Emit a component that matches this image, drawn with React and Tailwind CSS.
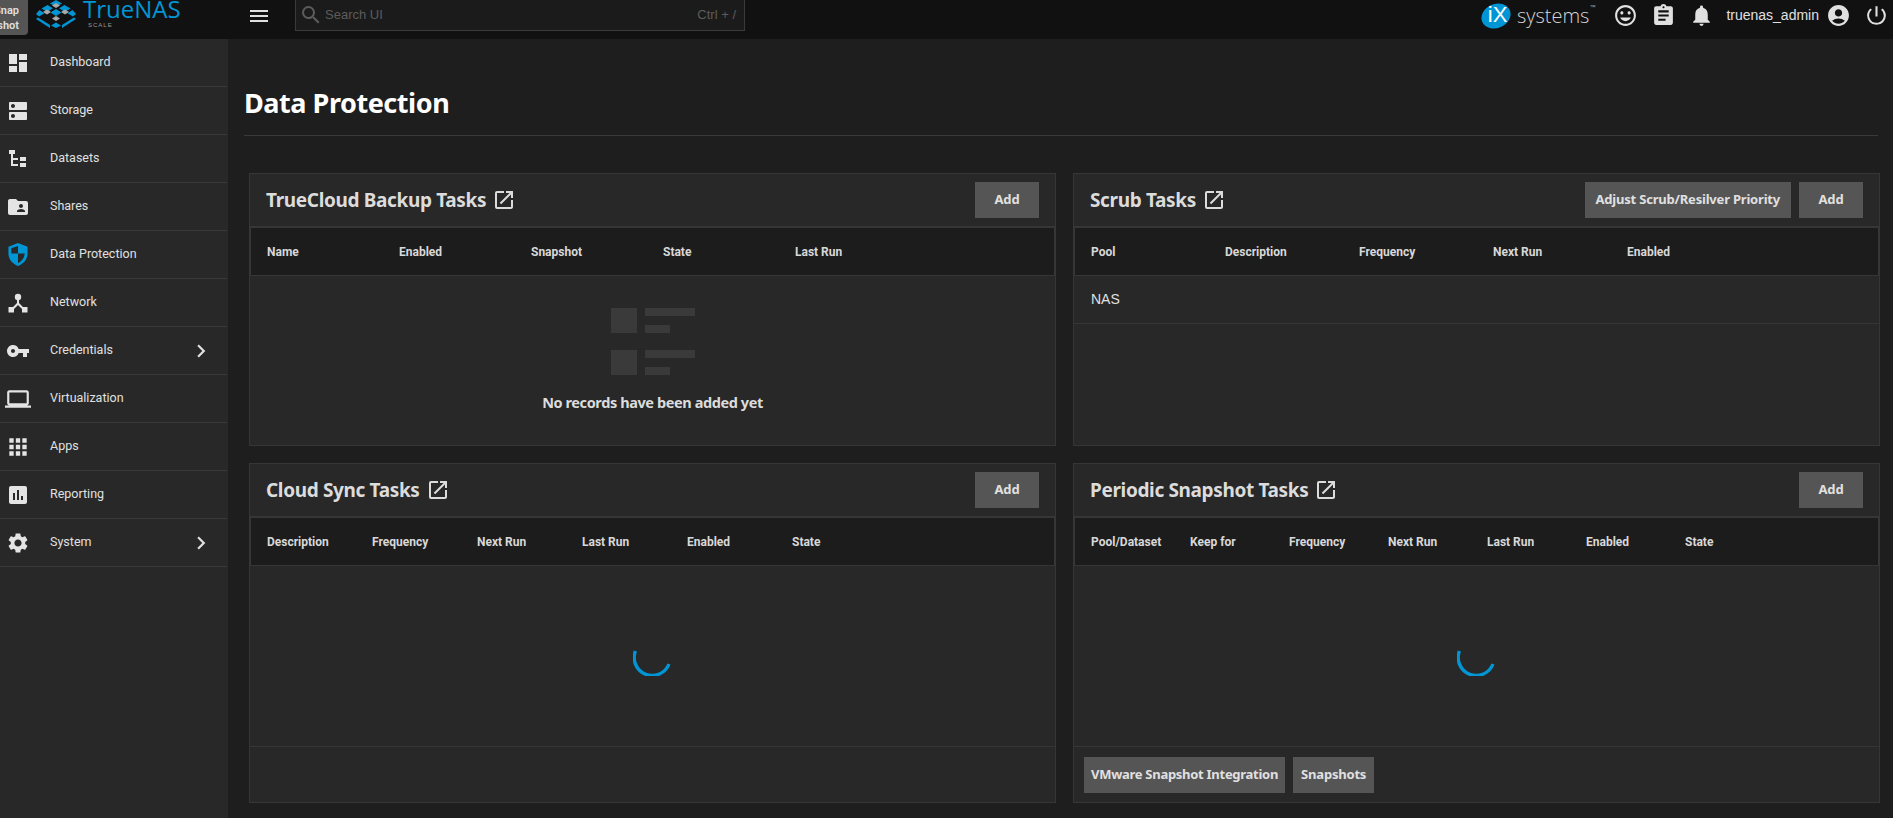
import {
  MdDashboard, MdDns, MdFolderShared, MdVpnKey, MdLaptop, MdApps, MdAssessment, MdSettings,
  MdChevronRight, MdOpenInNew, MdMenu, MdSearch, MdTagFaces, MdAssignment, MdNotifications,
  MdAccountCircle, MdPowerSettingsNew,
} from 'react-icons/md';

function DatasetsIcon() {
  return (
    <svg viewBox="0 0 20 20" className="w-[20px] h-[20px]" fill="#e4e4e4">
      <rect x="1" y="1" width="6" height="4" />
      <rect x="3" y="5" width="2" height="12" />
      <rect x="3" y="9" width="7" height="2" />
      <rect x="3" y="15" width="7" height="2" />
      <rect x="12" y="8" width="6" height="4" />
      <rect x="12" y="14" width="6" height="4" />
    </svg>
  );
}

function ShieldIcon() {
  return (
    <svg viewBox="0 0 20 24" className="w-[20px] h-[23px]">
      <path d="M10 0 L20 4 V11 C20 17 15.5 22 10 24 C4.5 22 0 17 0 11 V4 Z" fill="#0095d5" />
      <path d="M10 3 V11 H3 V5.5 Z" fill="#282828" />
      <path d="M10 11 H17 C16.6 15.5 14 19 10 21 Z" fill="#282828" />
    </svg>
  );
}

function NetworkIcon() {
  return (
    <svg viewBox="0 0 20 20" className="w-[20px] h-[20px]" fill="#e4e4e4">
      <circle cx="10" cy="4" r="3.2" />
      <path d="M9 6 H11 V10 L16.5 15.5 L15 17 L10 12 L5 17 L3.5 15.5 L9 10 Z" />
      <rect x="0.5" y="14" width="5.5" height="5.5" />
      <rect x="14" y="14" width="5.5" height="5.5" />
    </svg>
  );
}

function TrueNasMark() {
  return (
    <svg viewBox="0 0 40 28" className="w-[40px] h-[28px] shrink-0">
      <g fill="#0095d5">
        <path d="M20 0 L26 3.5 L20 7 L14 3.5 Z" />
        <path d="M11.5 5 L17 8.2 L11 12 L5.5 8.6 Z" />
        <path d="M28.5 5 L34.5 8.6 L29 12 L23 8.2 Z" />
        <path d="M3.5 10 L8.5 13.2 L3 16.5 L0 14 Z" />
        <path d="M36.5 10 L40 14 L37 16.5 L31.5 13.2 Z" />
        <path d="M20 9 L25.5 12.5 L20 16 L14.5 12.5 Z" />
        <path d="M2 17.5 L14 25 V28 L0 19 Z" />
        <path d="M38 17.5 L40 19 L26 28 V25 Z" />
        <path d="M15 25.5 L20 28 L25 25.5 L20 22.5 Z" />
      </g>
      <g fill="#a9a9a9">
        <path d="M20 3 L24 5.5 L20 8 L16 5.5 Z" />
        <path d="M11 9.5 L15 12 L11 14.5 L7 12 Z" />
        <path d="M29 9.5 L33 12 L29 14.5 L25 12 Z" />
        <path d="M20 16 L24 18.5 L20 21 L16 18.5 Z" />
      </g>
    </svg>
  );
}

function Spinner() {
  return (
    <svg viewBox="0 0 40 40" className="w-[40px] h-[40px]" fill="none">
      <path d="M2.4 15 A18 18 0 0 0 36 28" stroke="#0095d5" strokeWidth="3.4" />
    </svg>
  );
}

function EmptyIcon() {
  return (
    <svg viewBox="0 0 84 67" className="w-[84px] h-[67px]" fill="#3a3a3a">
      <rect x="0" y="0" width="26" height="25" />
      <rect x="34" y="0" width="50" height="8" />
      <rect x="34" y="17" width="25" height="8" />
      <rect x="0" y="42" width="26" height="25" />
      <rect x="34" y="42" width="50" height="8" />
      <rect x="34" y="59" width="25" height="8" />
    </svg>
  );
}

const navItems = [
  { label: 'Dashboard', icon: <MdDashboard size={24} color="#e4e4e4" /> },
  { label: 'Storage', icon: <MdDns size={24} color="#e4e4e4" /> },
  { label: 'Datasets', icon: <DatasetsIcon /> },
  { label: 'Shares', icon: <MdFolderShared size={24} color="#e4e4e4" /> },
  { label: 'Data Protection', icon: <ShieldIcon /> },
  { label: 'Network', icon: <NetworkIcon /> },
  { label: 'Credentials', icon: <MdVpnKey size={24} color="#e4e4e4" />, more: true },
  { label: 'Virtualization', icon: <MdLaptop size={26} color="#e4e4e4" /> },
  { label: 'Apps', icon: <MdApps size={26} color="#e4e4e4" /> },
  { label: 'Reporting', icon: <MdAssessment size={24} color="#e4e4e4" /> },
  { label: 'System', icon: <MdSettings size={24} color="#e4e4e4" />, more: true },
];

function Button({ children, className = 'px-[8px] tracking-[-0.2px]' }) {
  return (
    <button className={`h-[36px] min-w-[64px] bg-[#555555] text-[#e0e0e0] text-[13px] font-bold font-['Noto_Sans',sans-serif] whitespace-nowrap ${className}`}>
      {children}
    </button>
  );
}

function Card({ title, actions, columns, colWidth, footer, children }) {
  return (
    <div className="flex flex-col min-h-0 bg-[#282828] border border-[#363636]">
      <div className="flex items-center justify-between h-[54px] shrink-0 px-[16px] border-b-2 border-[#363636]">
        <div className="flex items-center gap-[6px] text-[#dcdcdc]">
          <h3 className="text-[19px] font-bold font-['Noto_Sans',sans-serif] tracking-[-0.35px]">{title}</h3>
          <MdOpenInNew size={24} />
        </div>
        <div className="flex gap-[8px]">{actions}</div>
      </div>
      <div className="flex items-center h-[48px] shrink-0 pl-[16px] bg-[#1c1c1c] border-x border-b border-[#363636]">
        {columns.map((c) => (
          <span key={c} style={{ width: colWidth }} className="text-[12px] font-bold text-[#d8d8d8] font-[Roboto,sans-serif]">
            {c}
          </span>
        ))}
      </div>
      <div className="flex-1 min-h-0 flex flex-col">{children}</div>
      {footer}
    </div>
  );
}

export default function App() {
  return (
    <div className="flex flex-col w-full h-screen overflow-hidden bg-[#1e1e1e] font-[Roboto,sans-serif]">
      <header className="flex items-center h-[39px] pb-[8px] shrink-0 bg-[#111111] text-[#e0e0e0]">
        <div className="flex flex-col items-end justify-center self-start w-[28px] h-[35px] pr-[9px] bg-[#555555] rounded-br-[4px] overflow-hidden text-[11px] leading-[15px] font-semibold shrink-0">
          <span className="whitespace-nowrap">Snap</span>
          <span className="whitespace-nowrap">shot</span>
        </div>
        <div className="self-start ml-[8px]"><TrueNasMark /></div>
        <div className="self-start flex flex-col ml-[7px] w-[101px]">
          <div className="text-[#0095d5] text-[24px] leading-[18px] font-['Open_Sans',sans-serif] whitespace-nowrap">TrueNAS</div>
          <div className="mt-[4px] pl-[5px] text-[#999999] text-[6px] leading-[7px] tracking-[1px] font-['Liberation_Sans',sans-serif]">SCALE</div>
        </div>
        <MdMenu size={24} className="ml-[63px] shrink-0" />
        <div className="flex items-center self-start ml-[24px] w-[450px] h-[31px] bg-[#1b1b1b] border-r border-b border-l border-[#3a3a3a] pl-[3px] pr-[8px] font-['Liberation_Sans',sans-serif]">
          <MdSearch size={24} color="#5c5c5c" />
          <span className="ml-[2px] text-[13px] text-[#5c5c5c]">Search UI</span>
          <span className="ml-auto text-[13px] text-[#5c5c5c]">Ctrl + /</span>
        </div>
        <div className="flex items-center ml-auto">
          <div className="flex items-center w-[30px] h-[24px] pl-[4px] justify-center -rotate-[24deg] bg-[#0095d5] rounded-[50%]">
            <span className="rotate-[24deg] text-white text-[22px] leading-none font-['Liberation_Sans',sans-serif]">iX</span>
          </div>
          <span className="ml-[6px] text-[20px] leading-none text-[#d4d4d4] font-['Open_Sans',sans-serif] font-light">systems</span>
          <span className="self-start mr-[18px] text-[6px] leading-[8px] text-[#b0b0b0] font-['Liberation_Sans',sans-serif]">™</span>
          <MdTagFaces size={25} />
          <MdAssignment size={25} className="ml-[13px]" />
          <MdNotifications size={25} className="ml-[13px]" />
          <span className="ml-[12px] text-[14px] font-['Liberation_Sans',sans-serif]">truenas_admin</span>
          <MdAccountCircle size={25} className="ml-[7px]" />
          <MdPowerSettingsNew size={25} className="ml-[13px] mr-[4px]" />
        </div>
      </header>

      <div className="flex flex-1 min-h-0">
        <aside className="w-[228px] shrink-0 bg-[#282828]">
          {navItems.map((item) => (
            <div key={item.label} className="flex items-center h-[48px] mr-[1px] border-b border-[#3a3a3a]">
              <div className="flex items-center justify-center w-[36px] shrink-0">{item.icon}</div>
              <span className="ml-[14px] text-[12.5px] text-[#e0e0e0]">{item.label}</span>
              {item.more && <MdChevronRight size={26} color="#e0e0e0" className="ml-auto mr-[13px]" />}
            </div>
          ))}
        </aside>

        <main className="flex-1 min-w-0 flex flex-col pl-[16px] pr-[15px]">
          <div className="flex items-center h-[97px] shrink-0 pt-[32px] border-b border-[#3a3a3a]">
            <h1 className="text-[27px] font-bold text-white font-['Noto_Sans',sans-serif] tracking-[-0.45px]">Data Protection</h1>
          </div>
          <div className="grid grid-cols-2 grid-rows-[273px_340px] gap-x-[17px] gap-y-[17px] pt-[37px] pl-[5px] -mr-[2px]">
            <Card
              title="TrueCloud Backup Tasks"
              actions={<Button>Add</Button>}
              columns={['Name', 'Enabled', 'Snapshot', 'State', 'Last Run']}
              colWidth={132}
            >
              <div className="flex flex-col items-center pt-[32px]">
                <EmptyIcon />
                <p className="mt-[17px] text-[14.5px] leading-[20px] font-bold text-[#dcdcdc] font-['Noto_Sans',sans-serif] tracking-[-0.4px]">No records have been added yet</p>
              </div>
            </Card>
            <Card
              title="Scrub Tasks"
              actions={<><Button className="px-[11px] tracking-[-0.2px]">Adjust Scrub/Resilver Priority</Button><Button>Add</Button></>}
              columns={['Pool', 'Description', 'Frequency', 'Next Run', 'Enabled']}
              colWidth={134}
            >
              <div className="flex items-center h-[48px] pl-[17px] border-b border-[#363636] text-[14px] text-[#e0e0e0] font-['Liberation_Sans',sans-serif]">NAS</div>
            </Card>
            <Card
              title="Cloud Sync Tasks"
              actions={<Button>Add</Button>}
              columns={['Description', 'Frequency', 'Next Run', 'Last Run', 'Enabled', 'State']}
              colWidth={105}
              footer={<div className="h-[56px] shrink-0 border-t border-[#363636]" />}
            >
              <div className="flex-1 flex items-center justify-center"><Spinner /></div>
            </Card>
            <Card
              title="Periodic Snapshot Tasks"
              actions={<Button>Add</Button>}
              columns={['Pool/Dataset', 'Keep for', 'Frequency', 'Next Run', 'Last Run', 'Enabled', 'State']}
              colWidth={99}
              footer={
                <div className="flex items-center gap-[8px] h-[56px] shrink-0 pl-[10px] border-t border-[#363636]">
                  <Button className="px-[7px] tracking-[-0.28px]">VMware Snapshot Integration</Button>
                  <Button>Snapshots</Button>
                </div>
              }
            >
              <div className="flex-1 flex items-center justify-center"><Spinner /></div>
            </Card>
          </div>
        </main>
      </div>
    </div>
  );
}
